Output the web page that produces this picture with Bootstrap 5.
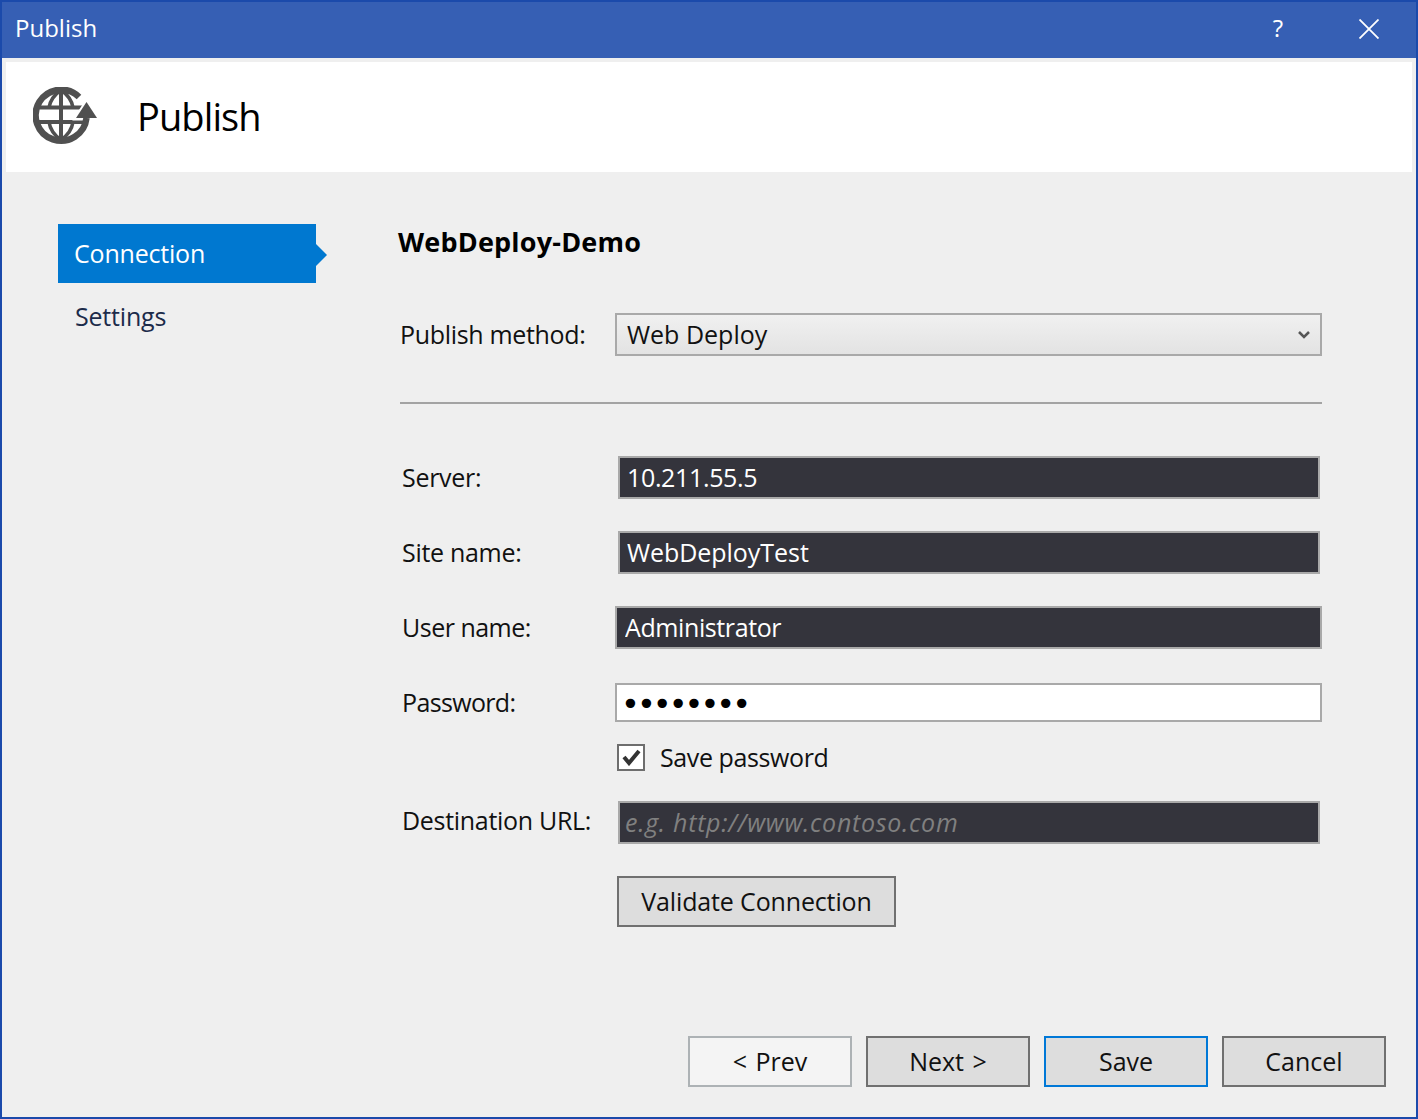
<!DOCTYPE html>
<html lang="en">

<head>
    <meta charset="UTF-8">
    <meta name="viewport" content="width=device-width, initial-scale=1.0">
    <title>Publish</title>
    <link href="https://cdn.jsdelivr.net/npm/bootstrap@5.3.3/dist/css/bootstrap.min.css" rel="stylesheet">
    <style>
        body {
            background: #efefef;
            font-family: "Open Sans", "Noto Sans", sans-serif;
            font-size: 25px;
            color: #111;
        }

        .dlg-window {
            height: 1119px;
            border: 2px solid #1b4aab;
            background: #efefef;
        }

        .dlg-titlebar {
            height: 56px;
            flex: none;
            background: #365fb4;
            color: #fff;
            padding: 0 37px 4px 13px;
        }

        .dlg-titlebar span {
            font-size: 24px;
            line-height: 1;
        }

        .title-actions {
            gap: 76px;
        }

        .title-actions svg {
            margin-top: 2px;
        }

        .dlg-header {
            height: 110px;
            flex: none;
            margin: 4px 4px 0;
            background: #fff;
            padding-left: 27px;
        }

        .dlg-header h1 {
            font-size: 38px;
            font-weight: 400;
            letter-spacing: -0.9px;
            margin: 0 0 0 34px;
            color: #000;
        }

        .dlg-body {
            flex: 1 1 auto;
            padding: 52px 94px 0 56px;
        }

        .side-nav {
            width: 258px;
            flex: none;
            letter-spacing: -0.2px;
        }

        .side-active {
            position: relative;
            height: 59px;
            background: #0078d0;
            color: #fff;
            padding-left: 16px;
        }

        .side-active::after {
            content: "";
            position: absolute;
            left: 100%;
            top: 20px;
            border-left: 11px solid #0078d0;
            border-top: 11px solid transparent;
            border-bottom: 11px solid transparent;
        }

        .side-link {
            height: 68px;
            padding-left: 17px;
            color: #1c2b4a;
        }

        .form-pane {
            margin-left: 82px;
            width: 924px;
        }

        .form-pane h2 {
            font-size: 27px;
            font-weight: 700;
            letter-spacing: 0.2px;
            line-height: 36px;
            margin: 0 0 53px;
            color: #000;
        }

        .method-row {
            height: 43px;
            padding-left: 2px;
        }

        .method-row label {
            width: 215px;
            flex: none;
            letter-spacing: -0.33px;
        }

        .dlg-select {
            height: 43px;
            border: 2px solid #a9a9a9;
            border-radius: 0;
            padding: 0 10px;
            background: linear-gradient(#f0f0f0, #e3e3e3);
        }

        .dlg-rule {
            margin: 46px 0 52px 2px;
            border: 0;
            border-top: 2px solid #a3a3a3;
            opacity: 1;
        }

        .field-row {
            height: 43px;
            margin-bottom: 32px;
            padding-left: 4px;
        }

        .field-row label {
            width: 213px;
            flex: none;
            margin: 0;
            letter-spacing: -0.3px;
        }

        .dlg-input,
        .dlg-input:focus {
            height: 43px;
            border: 2px solid #a9a9a9;
            border-radius: 0;
            padding: 0 8px 2px 7px;
            font-size: 25px;
            letter-spacing: -0.35px;
            background: #34343c;
            color: #fff;
            box-shadow: none;
        }

        .dlg-input::placeholder {
            color: #808080;
            font-style: italic;
            opacity: 1;
        }

        .dlg-input.url-input {
            padding-left: 5px;
            letter-spacing: 0.72px;
        }

        .dlg-input.site-input {
            letter-spacing: -0.05px;
        }

        .field-inset {
            margin: 0 2px 0 3px;
        }

        .user-row {
            margin-bottom: 34px;
        }

        .user-row label {
            letter-spacing: -0.5px;
        }

        .dlg-input.user-input {
            padding-left: 8px;
            letter-spacing: -0.4px;
        }

        .pass-row {
            height: 39px;
            margin-bottom: 22px;
        }

        .pass-row label {
            letter-spacing: -0.65px;
        }

        .dlg-input.pass-input,
        .dlg-input.pass-input:focus {
            height: 39px;
            padding: 3px 4px 0;
            background: #fff;
            color: #000;
            font-family: "DejaVu Sans", sans-serif;
            font-size: 32px;
            letter-spacing: -3px;
        }

        .save-row {
            height: 27px;
            margin: 0 0 30px 219px;
            letter-spacing: -0.4px;
            gap: 15px;
        }

        .save-box {
            width: 28px;
            height: 27px;
            flex: none;
            border: 2px solid #6e6e6e;
            background: #fff;
        }

        .url-row label {
            padding-bottom: 4px;
        }

        .validate-btn {
            display: block;
            width: 279px;
            height: 51px;
            margin-left: 219px;
            border: 2px solid #707070;
            border-radius: 0;
            background: #dddddd;
            color: #111;
            font-size: 25px;
            letter-spacing: -0.15px;
            padding: 0;
        }

        .dlg-footer {
            flex: none;
            gap: 14px;
            padding: 0 30px 30px 0;
        }

        .dlg-btn {
            width: 164px;
            height: 51px;
            border: 2px solid #707070;
            border-radius: 0;
            background: #dddddd;
            color: #111;
            font-size: 25px;
            word-spacing: 2px;
            padding: 0;
        }

        .dlg-btn.btn-off {
            background: #f4f4f4;
            border-color: #adb2b5;
        }

        .dlg-btn.btn-default {
            border-color: #0078d7;
        }
    </style>
</head>

<body>

    <div class="dlg-window d-flex flex-column">
        <div class="dlg-titlebar d-flex align-items-center justify-content-between">
            <span>Publish</span>
            <div class="title-actions d-flex align-items-center">
                <span>?</span>
                <svg width="20" height="20" viewBox="0 0 20 20" stroke="#fff" stroke-width="1.8" fill="none">
                    <path d="M0.5 0.5 19.5 19.5M19.5 0.5 0.5 19.5" />
                </svg>
            </div>
        </div>

        <div class="dlg-header d-flex align-items-center">
            <svg width="70" height="60" viewBox="0 0 70 60" fill="none" stroke="#505050">
                <!-- globe -->
                <path d="M28 3C21 8 17 14 16 20.5M28 3C35 8 39 14 40 20.5M28 53C21 48 17 42 16 35M28 53C35 48 39 42 40 35" stroke-width="3.5" />
                <path d="M28 3V53M4 20.5H50M4 35H50" stroke-width="4" />
                <!-- arrow -->
                <path d="M53.5 14 42 32H65Z" fill="#fff" stroke="#fff" stroke-width="3" />
                <path d="M46 10A25.5 25.5 0 1 0 53.5 31" stroke-width="6.5" />
                <path d="M53.5 15 43 31H64Z" fill="#505050" stroke="none" />
            </svg>
            <h1>Publish</h1>
        </div>

        <div class="dlg-body d-flex">
            <div class="side-nav">
                <div class="side-active d-flex align-items-center">Connection</div>
                <div class="side-link d-flex align-items-center">Settings</div>
            </div>

            <div class="form-pane">
                <h2>WebDeploy-Demo</h2>

                <div class="method-row d-flex align-items-center">
                    <label for="method">Publish method:</label>
                    <div id="method" class="dlg-select flex-grow-1 d-flex align-items-center justify-content-between">
                        <span>Web Deploy</span>
                        <svg width="12" height="8" viewBox="0 0 12 8" fill="none" stroke="#555" stroke-width="2.5">
                            <path d="M1 1 6 6 11 1" />
                        </svg>
                    </div>
                </div>

                <hr class="dlg-rule">

                <div class="field-row d-flex align-items-center">
                    <label for="server">Server:</label>
                    <input id="server" class="dlg-input field-inset form-control" value="10.211.55.5">
                </div>
                <div class="field-row d-flex align-items-center">
                    <label for="site">Site name:</label>
                    <input id="site" class="dlg-input site-input field-inset form-control" value="WebDeployTest">
                </div>
                <div class="field-row user-row d-flex align-items-center">
                    <label for="user">User name:</label>
                    <input id="user" class="dlg-input user-input form-control" value="Administrator">
                </div>
                <div class="field-row pass-row d-flex align-items-center">
                    <label for="pass">Password:</label>
                    <input id="pass" type="password" class="dlg-input pass-input form-control" value="password">
                </div>
                <div class="save-row d-flex align-items-center">
                    <div class="save-box d-flex align-items-center justify-content-center">
                        <svg width="19" height="17" viewBox="0 0 19 17" fill="none" stroke="#333" stroke-width="4">
                            <path d="M2 8 7 14 17 2" />
                        </svg>
                    </div>
                    <span>Save password</span>
                </div>
                <div class="field-row url-row d-flex align-items-center">
                    <label for="url">Destination URL:</label>
                    <input id="url" class="dlg-input url-input field-inset form-control" placeholder="e.g. http://www.contoso.com">
                </div>
                <button type="button" class="btn validate-btn">Validate Connection</button>
            </div>
        </div>

        <div class="dlg-footer d-flex justify-content-end">
            <button type="button" class="btn dlg-btn btn-off">&lt; Prev</button>
            <button type="button" class="btn dlg-btn">Next &gt;</button>
            <button type="button" class="btn dlg-btn btn-default">Save</button>
            <button type="button" class="btn dlg-btn">Cancel</button>
        </div>
    </div>

    <script src="https://cdn.jsdelivr.net/npm/bootstrap@5.3.3/dist/js/bootstrap.bundle.min.js"></script>

</body>

</html>
